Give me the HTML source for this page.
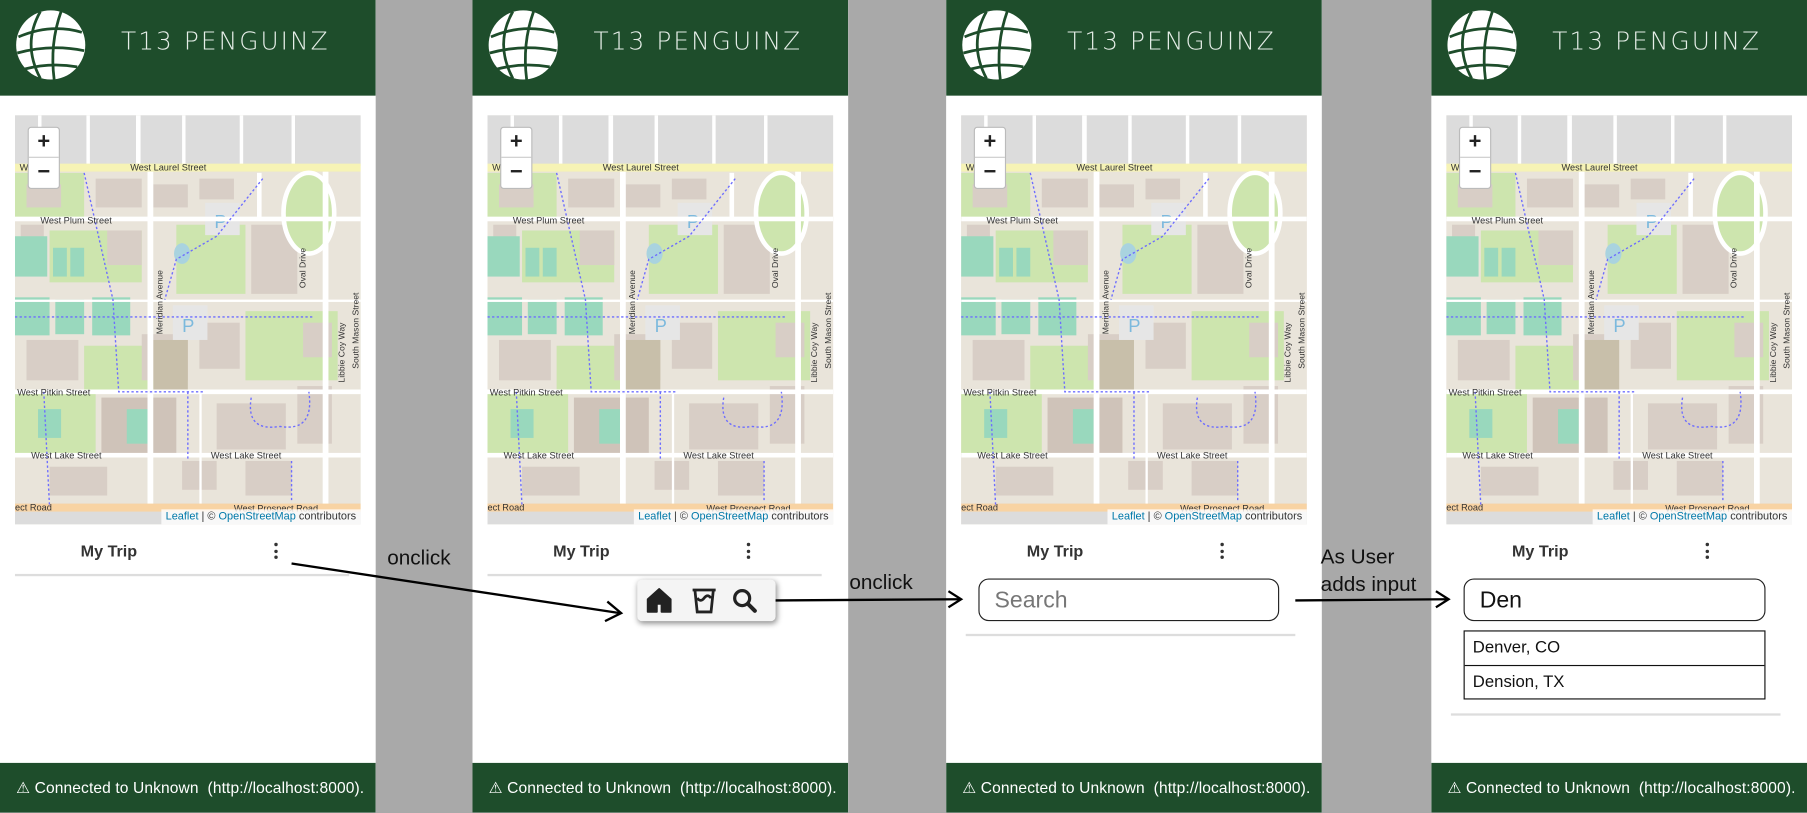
<!DOCTYPE html>
<html><head><meta charset="utf-8">
<style>
html,body{margin:0;padding:0;width:1807px;height:813px;overflow:hidden;background:#a9a9a9;}
#w{position:absolute;left:0;top:0;width:1568px;height:705px;transform:scale(1.15242);transform-origin:0 0;font-family:"Liberation Sans",sans-serif;}
.p{position:absolute;top:0;width:326px;height:705px;background:#fff;overflow:hidden;}
.hd{position:absolute;left:0;top:0;width:100%;height:83px;background:#1e4d2b;}
.hd .t{position:absolute;left:105px;top:24px;font-size:21.5px;letter-spacing:1.8px;color:#e6eee8;font-family:"DejaVu Sans","Liberation Sans",sans-serif;font-weight:300;}
.hd svg{position:absolute;left:13px;top:8px;}
.ft{position:absolute;left:0;top:662px;width:100%;height:43px;background:#1e4d2b;color:#fff;font-size:13.5px;line-height:43px;padding-left:14px;box-sizing:border-box;white-space:nowrap;letter-spacing:0.1px;}
.map{position:absolute;left:13px;top:100px;width:300px;height:355px;}
.zc{position:absolute;left:11px;top:10px;width:26px;height:52px;background:#fff;border:1px solid #bbb;border-radius:3px;}
.zc div{height:26px;line-height:26px;text-align:center;font-size:19px;font-weight:bold;color:#222;}
.zc div:first-child{border-bottom:1px solid #ccc;height:25px;}
.attr{position:absolute;right:0;bottom:0;background:rgba(255,255,255,.8);font-size:9.5px;padding:1px 4px;color:#333;white-space:nowrap;}
.attr span{color:#0078a8;}
.mt{position:absolute;left:70px;top:470px;font-size:14px;font-weight:bold;color:#333;}
.kb{position:absolute;left:238px;top:471px;width:4px;}
.kb i{display:block;width:3px;height:3px;border-radius:50%;background:#333;margin-bottom:2.5px;}
.ln{position:absolute;height:2px;background:#ddd;}
.lbl{position:absolute;font-size:18px;color:#111;font-family:"Liberation Sans",sans-serif;}
</style></head><body><div id="w">

<div class="p" style="left:0">
<div class="hd"><svg width="62" height="62" viewBox="0 0 62 62"><circle cx="31" cy="31" r="30" fill="#fff"/><g fill="none" stroke="#1e4d2b" stroke-width="2.4"><path d="M3,24 Q31,12 58,20"/><path d="M2,38 Q31,30 60,36"/><path d="M8,52 Q31,46 54,50"/><path d="M22,2 Q6,30 22,60"/><path d="M40,2 Q30,30 34,61"/></g></svg><div class="t">T13 PENGUINZ</div></div>
<svg class="map" viewBox="0 0 300 355" width="300" height="355"><rect width="300" height="355" fill="#e4ded5"/><rect width="300" height="44" fill="#dcdcdc"/><g fill="#fff"><rect x="20" y="0" width="3" height="44"/><rect x="62" y="0" width="3" height="44"/><rect x="105" y="0" width="4" height="44"/><rect x="145" y="0" width="3" height="44"/><rect x="195" y="0" width="3" height="44"/><rect x="240" y="0" width="3" height="44"/></g><rect x="0" y="42" width="300" height="7" fill="#f6f3b5"/><rect x="0" y="49" width="300" height="288" fill="#e9e4da"/><g fill="#cde5ae"><rect x="0" y="50" width="60" height="40"/><rect x="140" y="95" width="60" height="60"/><rect x="60" y="200" width="70" height="40"/><rect x="0" y="240" width="70" height="55"/><rect x="200" y="170" width="80" height="60"/><rect x="30" y="100" width="80" height="45"/></g><g fill="#d8cec6"><rect x="10" y="60" width="30" height="20"/><rect x="70" y="55" width="40" height="25"/><rect x="120" y="60" width="30" height="20"/><rect x="160" y="55" width="30" height="18"/><rect x="5" y="95" width="20" height="20"/><rect x="80" y="100" width="30" height="30"/><rect x="205" y="95" width="40" height="60"/><rect x="160" y="180" width="35" height="40"/><rect x="10" y="195" width="45" height="35"/><rect x="110" y="190" width="40" height="40"/><rect x="175" y="250" width="60" height="40"/><rect x="245" y="235" width="30" height="50"/><rect x="200" y="300" width="40" height="30"/><rect x="30" y="305" width="50" height="25"/><rect x="145" y="300" width="30" height="25"/><rect x="250" y="180" width="25" height="30"/></g><g fill="#99d8bd"><rect x="0" y="105" width="28" height="35"/><rect x="33" y="115" width="12" height="25"/><rect x="48" y="115" width="12" height="25"/><rect x="67" y="158" width="33" height="33"/><rect x="0" y="158" width="30" height="33"/><rect x="35" y="160" width="25" height="30"/><rect x="20" y="255" width="20" height="25"/></g><rect x="75" y="245" width="65" height="50" fill="#cfc3b9"/><rect x="97" y="255" width="18" height="30" fill="#99d8bd"/><rect x="120" y="195" width="30" height="43" fill="#c8bfaa"/><rect x="165" y="76" width="30" height="28" fill="#e6e6e6"/><rect x="137" y="165" width="30" height="30" fill="#e6e6e6"/><text x="173" y="98" font-size="16" fill="#7cb9dd" font-family="Liberation Sans">P</text><text x="145" y="188" font-size="16" fill="#7cb9dd" font-family="Liberation Sans">P</text><ellipse cx="145" cy="120" rx="7" ry="9" fill="#a9d3df"/><ellipse cx="255" cy="85" rx="22" ry="35" fill="#cde5ae" stroke="#fff" stroke-width="4"/><g fill="#fff"><rect x="0" y="88" width="300" height="4"/><rect x="0" y="238" width="300" height="4"/><rect x="0" y="293" width="300" height="4"/><rect x="0" y="160" width="300" height="2"/><rect x="115" y="49" width="5" height="290"/><rect x="267" y="49" width="5" height="290"/><rect x="210" y="50" width="4" height="40"/><rect x="160" y="240" width="2" height="100"/></g><rect x="0" y="337" width="300" height="7" fill="#f8d3a3"/><rect x="0" y="344" width="300" height="11" fill="#dcdcdc"/><g fill="none" stroke="#6d6dff" stroke-width="1.2" stroke-dasharray="2,2"><path d="M0,175 H260"/><path d="M60,50 L85,160 L90,240 L165,240"/><path d="M215,55 L175,105 L140,125 L130,160"/><path d="M150,240 V300"/><path d="M205,245 Q200,275 230,270 Q260,275 255,240"/><path d="M25,240 L30,340"/><path d="M240,300 V335"/></g><g font-family="Liberation Sans" font-size="8" fill="#333"><text x="4" y="48">Wes</text><text x="100" y="48">West Laurel Street</text><text x="22" y="94">West Plum Street</text><text x="2" y="243">West Pitkin Street</text><text x="14" y="298">West Lake Street</text><text x="170" y="298">West Lake Street</text><text x="0" y="343">ect Road</text><text x="190" y="344">West Prospect Road</text></g><g font-family="Liberation Sans" font-size="7.5" fill="#333"><text transform="translate(128,190) rotate(-90)">Meridian Avenue</text><text transform="translate(252,150) rotate(-90)">Oval Drive</text><text transform="translate(298,220) rotate(-90)">South Mason Street</text><text transform="translate(286,232) rotate(-90)">Libbie Coy Way</text></g></svg>
<div class="map"><div class="zc"><div>+</div><div>−</div></div><div class="attr"><span>Leaflet</span> | © <span>OpenStreetMap</span> contributors</div></div>
<div class="mt">My Trip</div><div class="kb"><i></i><i></i><i></i></div>
<div class="ln" style="left:13px;top:498px;width:290px"></div>
<div class="ft">⚠ Connected to Unknown&nbsp; (http://localhost:8000).</div>
</div>

<div class="p" style="left:410px">
<div class="hd"><svg width="62" height="62" viewBox="0 0 62 62"><circle cx="31" cy="31" r="30" fill="#fff"/><g fill="none" stroke="#1e4d2b" stroke-width="2.4"><path d="M3,24 Q31,12 58,20"/><path d="M2,38 Q31,30 60,36"/><path d="M8,52 Q31,46 54,50"/><path d="M22,2 Q6,30 22,60"/><path d="M40,2 Q30,30 34,61"/></g></svg><div class="t">T13 PENGUINZ</div></div>
<svg class="map" viewBox="0 0 300 355" width="300" height="355"><rect width="300" height="355" fill="#e4ded5"/><rect width="300" height="44" fill="#dcdcdc"/><g fill="#fff"><rect x="20" y="0" width="3" height="44"/><rect x="62" y="0" width="3" height="44"/><rect x="105" y="0" width="4" height="44"/><rect x="145" y="0" width="3" height="44"/><rect x="195" y="0" width="3" height="44"/><rect x="240" y="0" width="3" height="44"/></g><rect x="0" y="42" width="300" height="7" fill="#f6f3b5"/><rect x="0" y="49" width="300" height="288" fill="#e9e4da"/><g fill="#cde5ae"><rect x="0" y="50" width="60" height="40"/><rect x="140" y="95" width="60" height="60"/><rect x="60" y="200" width="70" height="40"/><rect x="0" y="240" width="70" height="55"/><rect x="200" y="170" width="80" height="60"/><rect x="30" y="100" width="80" height="45"/></g><g fill="#d8cec6"><rect x="10" y="60" width="30" height="20"/><rect x="70" y="55" width="40" height="25"/><rect x="120" y="60" width="30" height="20"/><rect x="160" y="55" width="30" height="18"/><rect x="5" y="95" width="20" height="20"/><rect x="80" y="100" width="30" height="30"/><rect x="205" y="95" width="40" height="60"/><rect x="160" y="180" width="35" height="40"/><rect x="10" y="195" width="45" height="35"/><rect x="110" y="190" width="40" height="40"/><rect x="175" y="250" width="60" height="40"/><rect x="245" y="235" width="30" height="50"/><rect x="200" y="300" width="40" height="30"/><rect x="30" y="305" width="50" height="25"/><rect x="145" y="300" width="30" height="25"/><rect x="250" y="180" width="25" height="30"/></g><g fill="#99d8bd"><rect x="0" y="105" width="28" height="35"/><rect x="33" y="115" width="12" height="25"/><rect x="48" y="115" width="12" height="25"/><rect x="67" y="158" width="33" height="33"/><rect x="0" y="158" width="30" height="33"/><rect x="35" y="160" width="25" height="30"/><rect x="20" y="255" width="20" height="25"/></g><rect x="75" y="245" width="65" height="50" fill="#cfc3b9"/><rect x="97" y="255" width="18" height="30" fill="#99d8bd"/><rect x="120" y="195" width="30" height="43" fill="#c8bfaa"/><rect x="165" y="76" width="30" height="28" fill="#e6e6e6"/><rect x="137" y="165" width="30" height="30" fill="#e6e6e6"/><text x="173" y="98" font-size="16" fill="#7cb9dd" font-family="Liberation Sans">P</text><text x="145" y="188" font-size="16" fill="#7cb9dd" font-family="Liberation Sans">P</text><ellipse cx="145" cy="120" rx="7" ry="9" fill="#a9d3df"/><ellipse cx="255" cy="85" rx="22" ry="35" fill="#cde5ae" stroke="#fff" stroke-width="4"/><g fill="#fff"><rect x="0" y="88" width="300" height="4"/><rect x="0" y="238" width="300" height="4"/><rect x="0" y="293" width="300" height="4"/><rect x="0" y="160" width="300" height="2"/><rect x="115" y="49" width="5" height="290"/><rect x="267" y="49" width="5" height="290"/><rect x="210" y="50" width="4" height="40"/><rect x="160" y="240" width="2" height="100"/></g><rect x="0" y="337" width="300" height="7" fill="#f8d3a3"/><rect x="0" y="344" width="300" height="11" fill="#dcdcdc"/><g fill="none" stroke="#6d6dff" stroke-width="1.2" stroke-dasharray="2,2"><path d="M0,175 H260"/><path d="M60,50 L85,160 L90,240 L165,240"/><path d="M215,55 L175,105 L140,125 L130,160"/><path d="M150,240 V300"/><path d="M205,245 Q200,275 230,270 Q260,275 255,240"/><path d="M25,240 L30,340"/><path d="M240,300 V335"/></g><g font-family="Liberation Sans" font-size="8" fill="#333"><text x="4" y="48">Wes</text><text x="100" y="48">West Laurel Street</text><text x="22" y="94">West Plum Street</text><text x="2" y="243">West Pitkin Street</text><text x="14" y="298">West Lake Street</text><text x="170" y="298">West Lake Street</text><text x="0" y="343">ect Road</text><text x="190" y="344">West Prospect Road</text></g><g font-family="Liberation Sans" font-size="7.5" fill="#333"><text transform="translate(128,190) rotate(-90)">Meridian Avenue</text><text transform="translate(252,150) rotate(-90)">Oval Drive</text><text transform="translate(298,220) rotate(-90)">South Mason Street</text><text transform="translate(286,232) rotate(-90)">Libbie Coy Way</text></g></svg>
<div class="map"><div class="zc"><div>+</div><div>−</div></div><div class="attr"><span>Leaflet</span> | © <span>OpenStreetMap</span> contributors</div></div>
<div class="mt">My Trip</div><div class="kb"><i></i><i></i><i></i></div>
<div class="ln" style="left:13px;top:498px;width:290px"></div>
<div style="position:absolute;left:143px;top:503px;width:120px;height:36px;background:#f4f4f4;border-radius:4px;box-shadow:1px 2px 5px rgba(0,0,0,.45);">
<svg width="120" height="36" viewBox="0 0 120 36"><path d="M9,17 L19,8 L29,17 V28 H21 V21 H17 V28 H9 Z" fill="#222" stroke="#222" stroke-width="1.5" stroke-linejoin="round"/><path d="M48,9 H68 M50,9 L52,28 H64 L66,9 M52,16 Q55,20 58,16 Q61,12 64,16" fill="none" stroke="#222" stroke-width="2.4"/><circle cx="91" cy="16" r="6.5" fill="none" stroke="#222" stroke-width="2.8"/><path d="M96,21 L102,27" stroke="#222" stroke-width="3.5" stroke-linecap="round"/></svg></div>
<div class="ft">⚠ Connected to Unknown&nbsp; (http://localhost:8000).</div>
</div>

<div class="p" style="left:821px">
<div class="hd"><svg width="62" height="62" viewBox="0 0 62 62"><circle cx="31" cy="31" r="30" fill="#fff"/><g fill="none" stroke="#1e4d2b" stroke-width="2.4"><path d="M3,24 Q31,12 58,20"/><path d="M2,38 Q31,30 60,36"/><path d="M8,52 Q31,46 54,50"/><path d="M22,2 Q6,30 22,60"/><path d="M40,2 Q30,30 34,61"/></g></svg><div class="t">T13 PENGUINZ</div></div>
<svg class="map" viewBox="0 0 300 355" width="300" height="355"><rect width="300" height="355" fill="#e4ded5"/><rect width="300" height="44" fill="#dcdcdc"/><g fill="#fff"><rect x="20" y="0" width="3" height="44"/><rect x="62" y="0" width="3" height="44"/><rect x="105" y="0" width="4" height="44"/><rect x="145" y="0" width="3" height="44"/><rect x="195" y="0" width="3" height="44"/><rect x="240" y="0" width="3" height="44"/></g><rect x="0" y="42" width="300" height="7" fill="#f6f3b5"/><rect x="0" y="49" width="300" height="288" fill="#e9e4da"/><g fill="#cde5ae"><rect x="0" y="50" width="60" height="40"/><rect x="140" y="95" width="60" height="60"/><rect x="60" y="200" width="70" height="40"/><rect x="0" y="240" width="70" height="55"/><rect x="200" y="170" width="80" height="60"/><rect x="30" y="100" width="80" height="45"/></g><g fill="#d8cec6"><rect x="10" y="60" width="30" height="20"/><rect x="70" y="55" width="40" height="25"/><rect x="120" y="60" width="30" height="20"/><rect x="160" y="55" width="30" height="18"/><rect x="5" y="95" width="20" height="20"/><rect x="80" y="100" width="30" height="30"/><rect x="205" y="95" width="40" height="60"/><rect x="160" y="180" width="35" height="40"/><rect x="10" y="195" width="45" height="35"/><rect x="110" y="190" width="40" height="40"/><rect x="175" y="250" width="60" height="40"/><rect x="245" y="235" width="30" height="50"/><rect x="200" y="300" width="40" height="30"/><rect x="30" y="305" width="50" height="25"/><rect x="145" y="300" width="30" height="25"/><rect x="250" y="180" width="25" height="30"/></g><g fill="#99d8bd"><rect x="0" y="105" width="28" height="35"/><rect x="33" y="115" width="12" height="25"/><rect x="48" y="115" width="12" height="25"/><rect x="67" y="158" width="33" height="33"/><rect x="0" y="158" width="30" height="33"/><rect x="35" y="160" width="25" height="30"/><rect x="20" y="255" width="20" height="25"/></g><rect x="75" y="245" width="65" height="50" fill="#cfc3b9"/><rect x="97" y="255" width="18" height="30" fill="#99d8bd"/><rect x="120" y="195" width="30" height="43" fill="#c8bfaa"/><rect x="165" y="76" width="30" height="28" fill="#e6e6e6"/><rect x="137" y="165" width="30" height="30" fill="#e6e6e6"/><text x="173" y="98" font-size="16" fill="#7cb9dd" font-family="Liberation Sans">P</text><text x="145" y="188" font-size="16" fill="#7cb9dd" font-family="Liberation Sans">P</text><ellipse cx="145" cy="120" rx="7" ry="9" fill="#a9d3df"/><ellipse cx="255" cy="85" rx="22" ry="35" fill="#cde5ae" stroke="#fff" stroke-width="4"/><g fill="#fff"><rect x="0" y="88" width="300" height="4"/><rect x="0" y="238" width="300" height="4"/><rect x="0" y="293" width="300" height="4"/><rect x="0" y="160" width="300" height="2"/><rect x="115" y="49" width="5" height="290"/><rect x="267" y="49" width="5" height="290"/><rect x="210" y="50" width="4" height="40"/><rect x="160" y="240" width="2" height="100"/></g><rect x="0" y="337" width="300" height="7" fill="#f8d3a3"/><rect x="0" y="344" width="300" height="11" fill="#dcdcdc"/><g fill="none" stroke="#6d6dff" stroke-width="1.2" stroke-dasharray="2,2"><path d="M0,175 H260"/><path d="M60,50 L85,160 L90,240 L165,240"/><path d="M215,55 L175,105 L140,125 L130,160"/><path d="M150,240 V300"/><path d="M205,245 Q200,275 230,270 Q260,275 255,240"/><path d="M25,240 L30,340"/><path d="M240,300 V335"/></g><g font-family="Liberation Sans" font-size="8" fill="#333"><text x="4" y="48">Wes</text><text x="100" y="48">West Laurel Street</text><text x="22" y="94">West Plum Street</text><text x="2" y="243">West Pitkin Street</text><text x="14" y="298">West Lake Street</text><text x="170" y="298">West Lake Street</text><text x="0" y="343">ect Road</text><text x="190" y="344">West Prospect Road</text></g><g font-family="Liberation Sans" font-size="7.5" fill="#333"><text transform="translate(128,190) rotate(-90)">Meridian Avenue</text><text transform="translate(252,150) rotate(-90)">Oval Drive</text><text transform="translate(298,220) rotate(-90)">South Mason Street</text><text transform="translate(286,232) rotate(-90)">Libbie Coy Way</text></g></svg>
<div class="map"><div class="zc"><div>+</div><div>−</div></div><div class="attr"><span>Leaflet</span> | © <span>OpenStreetMap</span> contributors</div></div>
<div class="mt">My Trip</div><div class="kb"><i></i><i></i><i></i></div>
<div style="position:absolute;left:28px;top:502px;width:261px;height:37px;box-sizing:border-box;border:1px solid #222;border-radius:9px;font-size:20px;line-height:37px;padding-left:13px;color:#777;">Search</div>
<div class="ln" style="left:17px;top:550px;width:286px"></div>
<div class="ft">⚠ Connected to Unknown&nbsp; (http://localhost:8000).</div>
</div>

<div class="p" style="left:1242px">
<div class="hd"><svg width="62" height="62" viewBox="0 0 62 62"><circle cx="31" cy="31" r="30" fill="#fff"/><g fill="none" stroke="#1e4d2b" stroke-width="2.4"><path d="M3,24 Q31,12 58,20"/><path d="M2,38 Q31,30 60,36"/><path d="M8,52 Q31,46 54,50"/><path d="M22,2 Q6,30 22,60"/><path d="M40,2 Q30,30 34,61"/></g></svg><div class="t">T13 PENGUINZ</div></div>
<svg class="map" viewBox="0 0 300 355" width="300" height="355"><rect width="300" height="355" fill="#e4ded5"/><rect width="300" height="44" fill="#dcdcdc"/><g fill="#fff"><rect x="20" y="0" width="3" height="44"/><rect x="62" y="0" width="3" height="44"/><rect x="105" y="0" width="4" height="44"/><rect x="145" y="0" width="3" height="44"/><rect x="195" y="0" width="3" height="44"/><rect x="240" y="0" width="3" height="44"/></g><rect x="0" y="42" width="300" height="7" fill="#f6f3b5"/><rect x="0" y="49" width="300" height="288" fill="#e9e4da"/><g fill="#cde5ae"><rect x="0" y="50" width="60" height="40"/><rect x="140" y="95" width="60" height="60"/><rect x="60" y="200" width="70" height="40"/><rect x="0" y="240" width="70" height="55"/><rect x="200" y="170" width="80" height="60"/><rect x="30" y="100" width="80" height="45"/></g><g fill="#d8cec6"><rect x="10" y="60" width="30" height="20"/><rect x="70" y="55" width="40" height="25"/><rect x="120" y="60" width="30" height="20"/><rect x="160" y="55" width="30" height="18"/><rect x="5" y="95" width="20" height="20"/><rect x="80" y="100" width="30" height="30"/><rect x="205" y="95" width="40" height="60"/><rect x="160" y="180" width="35" height="40"/><rect x="10" y="195" width="45" height="35"/><rect x="110" y="190" width="40" height="40"/><rect x="175" y="250" width="60" height="40"/><rect x="245" y="235" width="30" height="50"/><rect x="200" y="300" width="40" height="30"/><rect x="30" y="305" width="50" height="25"/><rect x="145" y="300" width="30" height="25"/><rect x="250" y="180" width="25" height="30"/></g><g fill="#99d8bd"><rect x="0" y="105" width="28" height="35"/><rect x="33" y="115" width="12" height="25"/><rect x="48" y="115" width="12" height="25"/><rect x="67" y="158" width="33" height="33"/><rect x="0" y="158" width="30" height="33"/><rect x="35" y="160" width="25" height="30"/><rect x="20" y="255" width="20" height="25"/></g><rect x="75" y="245" width="65" height="50" fill="#cfc3b9"/><rect x="97" y="255" width="18" height="30" fill="#99d8bd"/><rect x="120" y="195" width="30" height="43" fill="#c8bfaa"/><rect x="165" y="76" width="30" height="28" fill="#e6e6e6"/><rect x="137" y="165" width="30" height="30" fill="#e6e6e6"/><text x="173" y="98" font-size="16" fill="#7cb9dd" font-family="Liberation Sans">P</text><text x="145" y="188" font-size="16" fill="#7cb9dd" font-family="Liberation Sans">P</text><ellipse cx="145" cy="120" rx="7" ry="9" fill="#a9d3df"/><ellipse cx="255" cy="85" rx="22" ry="35" fill="#cde5ae" stroke="#fff" stroke-width="4"/><g fill="#fff"><rect x="0" y="88" width="300" height="4"/><rect x="0" y="238" width="300" height="4"/><rect x="0" y="293" width="300" height="4"/><rect x="0" y="160" width="300" height="2"/><rect x="115" y="49" width="5" height="290"/><rect x="267" y="49" width="5" height="290"/><rect x="210" y="50" width="4" height="40"/><rect x="160" y="240" width="2" height="100"/></g><rect x="0" y="337" width="300" height="7" fill="#f8d3a3"/><rect x="0" y="344" width="300" height="11" fill="#dcdcdc"/><g fill="none" stroke="#6d6dff" stroke-width="1.2" stroke-dasharray="2,2"><path d="M0,175 H260"/><path d="M60,50 L85,160 L90,240 L165,240"/><path d="M215,55 L175,105 L140,125 L130,160"/><path d="M150,240 V300"/><path d="M205,245 Q200,275 230,270 Q260,275 255,240"/><path d="M25,240 L30,340"/><path d="M240,300 V335"/></g><g font-family="Liberation Sans" font-size="8" fill="#333"><text x="4" y="48">Wes</text><text x="100" y="48">West Laurel Street</text><text x="22" y="94">West Plum Street</text><text x="2" y="243">West Pitkin Street</text><text x="14" y="298">West Lake Street</text><text x="170" y="298">West Lake Street</text><text x="0" y="343">ect Road</text><text x="190" y="344">West Prospect Road</text></g><g font-family="Liberation Sans" font-size="7.5" fill="#333"><text transform="translate(128,190) rotate(-90)">Meridian Avenue</text><text transform="translate(252,150) rotate(-90)">Oval Drive</text><text transform="translate(298,220) rotate(-90)">South Mason Street</text><text transform="translate(286,232) rotate(-90)">Libbie Coy Way</text></g></svg>
<div class="map"><div class="zc"><div>+</div><div>−</div></div><div class="attr"><span>Leaflet</span> | © <span>OpenStreetMap</span> contributors</div></div>
<div class="mt">My Trip</div><div class="kb"><i></i><i></i><i></i></div>
<div style="position:absolute;left:28px;top:502px;width:262px;height:37px;box-sizing:border-box;border:1px solid #222;border-radius:9px;font-size:20px;line-height:37px;padding-left:13px;color:#111;">Den</div>
<div style="position:absolute;left:28px;top:547px;width:262px;height:60px;box-sizing:border-box;border:1px solid #111;font-size:14.5px;color:#111;">
<div style="height:29px;line-height:29px;padding-left:7px;border-bottom:1px solid #111;">Denver, CO</div>
<div style="height:29px;line-height:29px;padding-left:7px;">Dension, TX</div></div>
<div class="ln" style="left:17px;top:619px;width:286px"></div>
<div class="ft">⚠ Connected to Unknown&nbsp; (http://localhost:8000).</div>
</div>

<svg style="position:absolute;left:0;top:0" width="1568" height="705">
<g stroke="#000" stroke-width="2" fill="none">
<path d="M253,489 L538,532"/><path d="M527,522 L539,532 L525,539"/>
<path d="M673,521 L833,520"/><path d="M823,513 L834,520 L823,527"/>
<path d="M1124,521 L1256,520"/><path d="M1246,513 L1257,520 L1246,527"/>
</g></svg>
<div class="lbl" style="left:336px;top:474px">onclick</div>
<div class="lbl" style="left:737px;top:495px">onclick</div>
<div class="lbl" style="left:1146px;top:471px;line-height:24px">As User<br>adds input</div>

</div></body></html>
